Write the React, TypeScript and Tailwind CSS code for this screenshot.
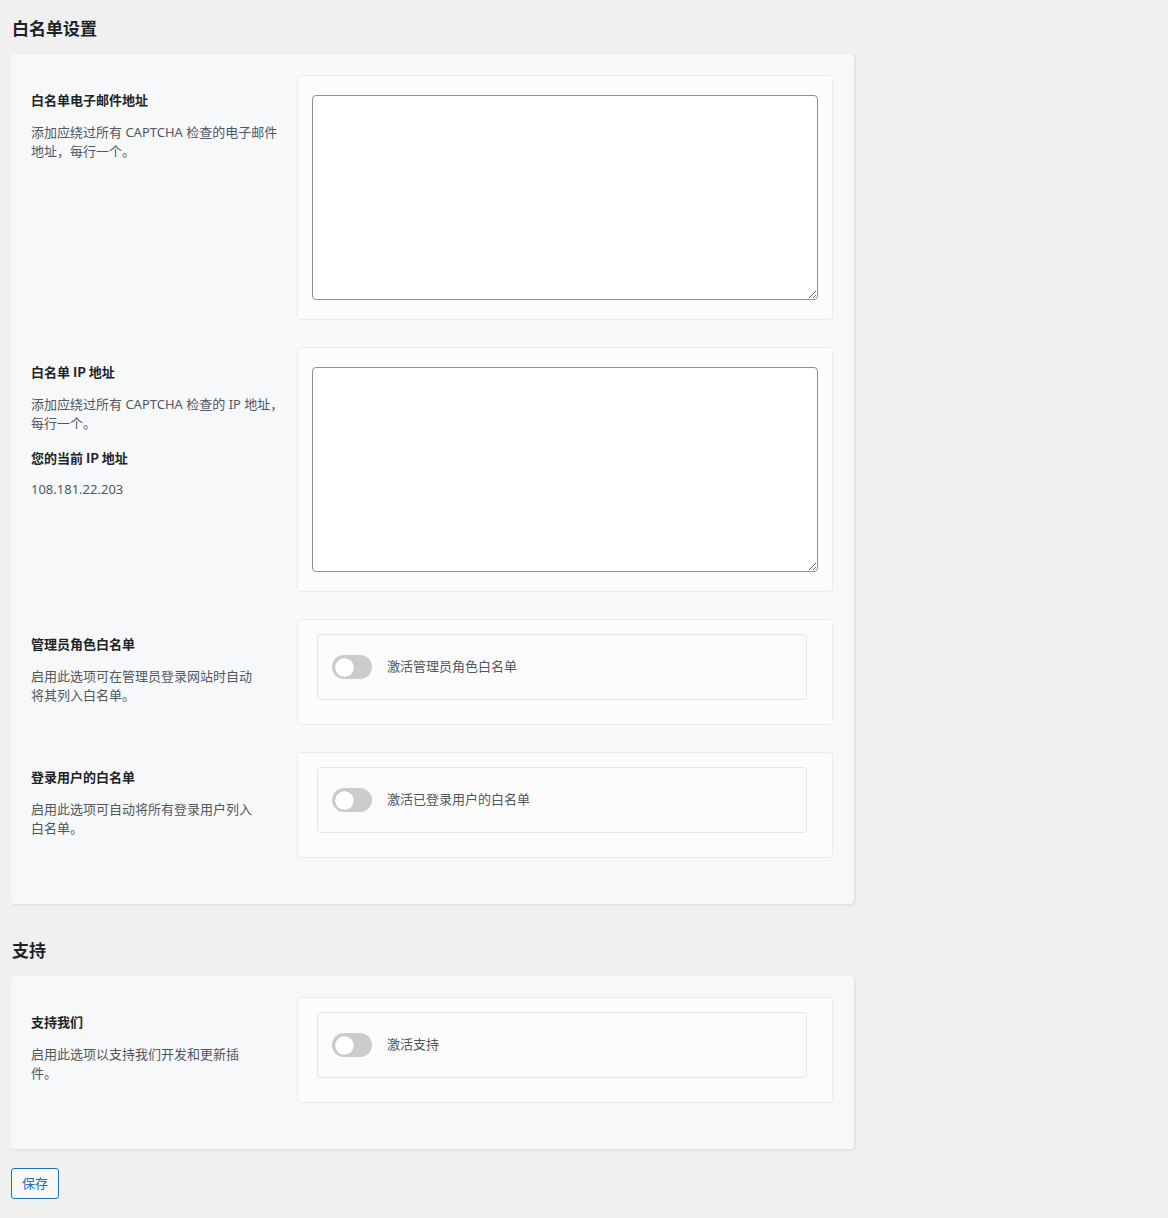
import React from 'react';

const FONT = { fontFamily: '"Noto Sans", "Noto Sans CJK SC", sans-serif' };
const BOLD = { fontFamily: '"Noto Sans CJK SC", "Noto Sans", sans-serif' };

function Label({ children }: { children: React.ReactNode }) {
  return (
    <p className="text-[13px] leading-[19.5px] font-bold text-[#1d2327]" style={BOLD}>
      {children}
    </p>
  );
}

function Desc({ children }: { children: React.ReactNode }) {
  return <p className="mt-[13px] text-[13px] leading-[19.5px] text-[#50575e]">{children}</p>;
}

function Toggle({ text }: { text: string }) {
  return (
    <div className="pt-[14px] pl-[19px] pr-[25px] pb-[24px]">
      <div className="h-[66px] flex items-center gap-[15px] px-[14px] border border-[#e6e6e7] rounded-[3px] bg-[#fbfbfb]">
        <div className="w-[40px] h-[24px] rounded-full bg-[#cccccc] flex items-center px-[3px]">
          <div className="w-[19px] h-[19px] rounded-full bg-white shadow-[0_0_1px_rgba(0,0,0,0.25)]" />
        </div>
        <span className="text-[13px] text-[#50575e]">{text}</span>
      </div>
    </div>
  );
}

function Row({ left, children }: { left: React.ReactNode; children: React.ReactNode }) {
  return (
    <div className="flex">
      <div className="w-[266px] shrink-0 pt-[15px]">{left}</div>
      <div className="flex-1 bg-[#fcfcfc] border border-[#ebebeb] rounded-[4px]">{children}</div>
    </div>
  );
}

function TextBox() {
  return (
    <div className="px-[14px] py-[19px]">
      <textarea className="block w-full h-[205px] bg-white border border-[#8c8f94] rounded-[4px] outline-none" />
    </div>
  );
}

function Card({ children }: { children: React.ReactNode }) {
  return (
    <div className="w-[843px] bg-[#f7f8f9] rounded-[4px] shadow-[1px_1px_3px_rgba(0,0,0,0.1)] pt-[21px] pb-[46px] pl-[20px] pr-[21px] flex flex-col gap-[27px]">
      {children}
    </div>
  );
}

export default function App() {
  return (
    <div className="min-h-[1218px] bg-[#f0f0f1] px-[11px] pt-[16px] pb-[19px]" style={FONT}>
      <h2 className="text-[17px] leading-[24px] font-bold text-[#1d2327] pl-[1px] mb-[14px]" style={BOLD}>
        白名单设置
      </h2>
      <Card>
        <Row
          left={
            <>
              <Label>白名单电子邮件地址</Label>
              <Desc>
                添加应绕过所有 CAPTCHA 检查的电子邮件
                <br />
                地址，每行一个。
              </Desc>
            </>
          }
        >
          <TextBox />
        </Row>
        <Row
          left={
            <>
              <Label>白名单 IP 地址</Label>
              <Desc>
                添加应绕过所有 CAPTCHA 检查的 IP 地址，
                <br />
                每行一个。
              </Desc>
              <div className="mt-[14px]">
                <Label>您的当前 IP 地址</Label>
              </div>
              <Desc>108.181.22.203</Desc>
            </>
          }
        >
          <TextBox />
        </Row>
        <Row
          left={
            <>
              <Label>管理员角色白名单</Label>
              <Desc>
                启用此选项可在管理员登录网站时自动
                <br />
                将其列入白名单。
              </Desc>
            </>
          }
        >
          <Toggle text="激活管理员角色白名单" />
        </Row>
        <Row
          left={
            <>
              <Label>登录用户的白名单</Label>
              <Desc>
                启用此选项可自动将所有登录用户列入
                <br />
                白名单。
              </Desc>
            </>
          }
        >
          <Toggle text="激活已登录用户的白名单" />
        </Row>
      </Card>

      <h2 className="mt-[34px] text-[17px] leading-[24px] font-bold text-[#1d2327] pl-[1px] mb-[14px]" style={BOLD}>
        支持
      </h2>
      <Card>
        <Row
          left={
            <>
              <Label>支持我们</Label>
              <Desc>
                启用此选项以支持我们开发和更新插
                <br />
                件。
              </Desc>
            </>
          }
        >
          <Toggle text="激活支持" />
        </Row>
      </Card>

      <button className="mt-[19px] h-[31px] px-[10px] text-[13px] text-[#2271b1] bg-[#f6f7f7] border border-[#2271b1] rounded-[3px]">
        保存
      </button>
    </div>
  );
}
